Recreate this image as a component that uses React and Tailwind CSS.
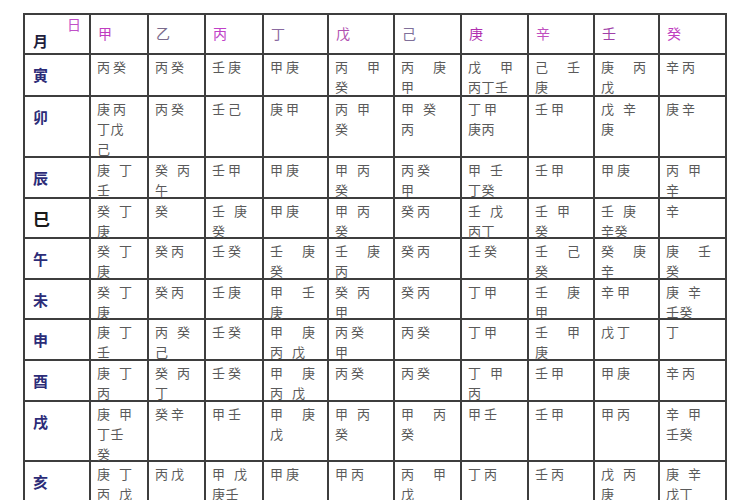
import React from 'react';

// 日干 header: label + colour as it shows in the scan
const stems = [
    { name: '甲', color: 'text-[#c03cc0]' },
    { name: '乙', color: 'text-[#7a6b8c]' },
    { name: '丙', color: 'text-[#c040c8]' },
    { name: '丁', color: 'text-[#8a6aa0]' },
    { name: '戊', color: 'text-[#b050b0]' },
    { name: '己', color: 'text-[#80709a]' },
    { name: '庚', color: 'text-[#b030b0]' },
    { name: '辛', color: 'text-[#c050c0]' },
    { name: '壬', color: 'text-[#a040a8]' },
    { name: '癸', color: 'text-[#c040c0]' },
];

// "|" splits lines, a leading "~" means the line is set tight
const rows = [
    { month: '寅', cells: ['丙癸', '丙癸', '壬庚', '甲庚', '丙　甲|癸', '丙　庚|甲', '戊　甲|~丙丁壬', '己　壬|庚', '庚　丙|戊', '辛丙'] },
    { month: '卯', cells: ['庚丙|~丁戊|己', '丙癸', '壬己', '庚甲', '丙 甲|癸', '甲 癸|丙', '丁甲|~庚丙', '壬甲', '戊 辛|庚', '庚辛'] },
    { month: '辰', cells: ['庚 丁|壬', '癸 丙|午', '壬甲', '甲庚', '甲 丙|癸', '丙癸|甲', '甲 壬|~丁癸', '壬甲', '甲庚', '丙 甲|辛'] },
    { month: '巳', cells: ['癸 丁|庚', '癸', '壬 庚|癸', '甲庚', '甲 丙|癸', '癸丙', '壬 戊|~丙丁', '壬 甲|癸', '壬 庚|~辛癸', '辛'] },
    { month: '午', cells: ['癸 丁|庚', '癸丙', '壬癸', '壬　庚|癸', '壬　庚|丙', '癸丙', '壬癸', '壬　己|癸', '癸　庚|辛', '庚　壬|癸'] },
    { month: '未', cells: ['癸 丁|庚', '癸丙', '壬庚', '甲　壬|庚', '癸 丙|甲', '癸丙', '丁甲', '壬　庚|甲', '辛甲', '庚 辛|~壬癸'] },
    { month: '申', cells: ['庚 丁|壬', '丙 癸|己', '壬癸', '甲　庚|丙 戊', '丙癸|甲', '丙癸', '丁甲', '壬　甲|庚', '戊丁', '丁'] },
    { month: '酉', cells: ['庚 丁|丙', '癸 丙|丁', '壬癸', '甲　庚|丙 戊', '丙癸', '丙癸', '丁 甲|丙', '壬甲', '甲庚', '辛丙'] },
    { month: '戌', cells: ['庚 甲|~丁壬|癸', '癸辛', '甲壬', '甲　庚|戊', '甲 丙|癸', '甲　丙|癸', '甲壬', '壬甲', '甲丙', '辛 甲|~壬癸'] },
    { month: '亥', cells: ['庚 丁|丙 戊', '丙戊', '甲 戊|~庚壬', '甲庚', '甲丙', '丙　甲|戊', '丁丙', '壬丙', '戊 丙|庚', '庚 辛|~戊丁'] },
];

const font = { fontFamily: '"Noto Sans CJK SC", "Noto Sans", sans-serif' };

const Cell = ({ text }) => (
    <div className="bg-white pl-[6px] pt-[2px] text-[13px] leading-[20px] text-[#5a5a5a]">
        {text.split('|').map((line, i) =>
            line.startsWith('~') ? (
                <div key={i} className="whitespace-pre tracking-[0.5px]">
                    {line.slice(1)}
                </div>
            ) : (
                <div key={i} className="whitespace-pre tracking-[3px]">
                    {line}
                </div>
            )
        )}
    </div>
);

const App = () => {
    return (
        <div className="w-[750px] h-[500px] overflow-hidden bg-white" style={font}>
            <div className="ml-[23px] mt-[13px] w-max">
                <div className="grid grid-cols-[64px_56px_55px_56px_63px_64px_65px_65px_64px_63px_65px] grid-rows-[38px_40px_59px_39px_38px_39px_38px_39px_39px_58px_58px] gap-[2px] p-[2px] bg-[#3e3e3e]">
                    {/* corner cell */}
                    <div className="bg-white flex flex-col px-[8px] pt-[1px]">
                        <span className="self-end text-[14px] leading-[16px] text-[#c050c8]">日</span>
                        <span className="text-[15px] leading-[18px] font-bold text-[#1e1e3c]">月</span>
                    </div>
                    {stems.map((s) => (
                        <div key={s.name} className={`bg-white pl-[7px] pt-[9px] text-[14px] leading-[18px] ${s.color}`}>
                            {s.name}
                        </div>
                    ))}

                    {rows.map((row) => (
                        <React.Fragment key={row.month}>
                            <div
                                className={
                                    row.month === '巳'
                                        ? 'bg-white pl-[8px] pt-[10px] text-[17px] leading-[20px] font-bold text-[#1a1a1a]'
                                        : 'bg-white pl-[8px] pt-[10px] text-[15px] leading-[20px] font-bold text-[#2c2c78]'
                                }
                            >
                                {row.month}
                            </div>
                            {row.cells.map((c, i) => (
                                <Cell key={i} text={c} />
                            ))}
                        </React.Fragment>
                    ))}
                </div>
            </div>
        </div>
    );
};

export default App;
